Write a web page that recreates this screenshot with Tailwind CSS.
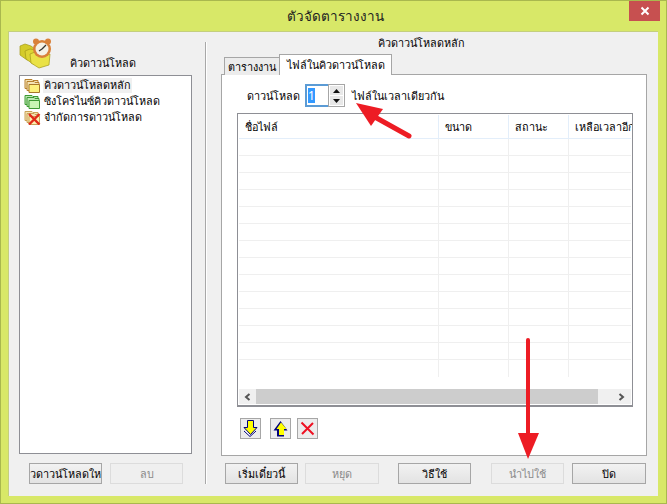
<!DOCTYPE html>
<html lang="th">
  <head>
    <meta charset="UTF-8" />
    <title>ตัวจัดตารางงาน</title>
    <script src="https://cdn.jsdelivr.net/npm/@tailwindcss/browser@4"></script>
  </head>
  <body class="m-0 overflow-hidden">
    <!-- Window -->
    <div class="relative w-[667px] h-[504px] flex flex-col bg-[#d8e868] border border-[#a9b84e] text-black text-[10.8px] leading-[14px] font-['Noto_Sans','DejaVu_Sans',sans-serif]">
      <!-- Title bar -->
      <div class="relative h-[30px] flex items-center justify-center pl-[3px] text-[13.5px] text-[#222]">
        ตัวจัดตารางงาน
        <div class="absolute right-[6px] top-0 w-[31px] h-[20px] bg-[#c75050] flex items-center justify-center">
          <svg width="10" height="10" viewBox="0 0 10 10"><path d="M1.500 1.500 L8.500 8.500 M8.500 1.500 L1.500 8.500" stroke="#fff" stroke-width="2" /></svg>
        </div>
      </div>

      <!-- Dialog body -->
      <div class="ml-[7px] mr-[8px] h-[465px] bg-[#f0f0f0] border-l border-t border-[#c4cf7e] flex">
        <!-- Left column -->
        <div class="w-[196px] shrink-0 flex flex-col pl-[10px]">
          <div class="h-[43px] relative">
            <!-- Clock and folders -->
            <svg class="absolute left-0 top-[6px]" width="34" height="32" viewBox="0 0 34 32">
              <path d="M1 8 L6 6 L12 8 L20 14 L18 22 L8 22 L1 17 Z" fill="#d4cb2a" stroke="#a39a18" stroke-width="0.7" />
              <path d="M6 13 L11 11 L17 12 L24 18 L22 27 L14 26 L7 21 Z" fill="#ddd433" stroke="#a39a18" stroke-width="0.7" />
              <path d="M11 16 L16 14 L24 17 L31 16 L30 27 L20 30 L12 25 Z" fill="#eae246" stroke="#a39a18" stroke-width="0.7" />
              <circle cx="17" cy="3.500" r="3" fill="#d9813a" />
              <circle cx="29" cy="3.500" r="3" fill="#d9813a" />
              <circle cx="23" cy="11" r="9" fill="#d9813a" />
              <circle cx="23" cy="11" r="6.500" fill="#f5f1e6" />
              <path d="M23 11 L27 7 M23 11 L20 13" stroke="#333" stroke-width="1.300" />
            </svg>
            <span class="absolute left-[51px] top-[24px]">คิวดาวน์โหลด</span>
          </div>
          <!-- Tree list -->
          <div class="w-[173px] h-[379px] bg-white border border-[#8e8f95] pt-[1px] pl-[4px] flex flex-col">
            <div class="h-[16px] flex items-center gap-[2px]">
              <svg width="17" height="15" viewBox="0 0 17 15">
                <path d="M1 1.500h7l1 1h5v8H1z" fill="#f4e3b4" stroke="#b8812e" />
                <path d="M3 3.500h7l1 1h4v8H3z" fill="#f4e3b4" stroke="#b8812e" />
                <path d="M5 6.500h10.500v8H5z" fill="#fdf07c" stroke="#a8782a" />
              </svg>
              <span class="bg-[#f0f0f0] px-[1px] h-[15px] flex items-center">คิวดาวน์โหลดหลัก</span>
            </div>
            <div class="h-[16px] flex items-center gap-[2px]">
              <svg width="17" height="15" viewBox="0 0 17 15">
                <path d="M1 1.500h7l1 1h5v8H1z" fill="#bde8b4" stroke="#3e9a34" />
                <path d="M3 3.500h7l1 1h4v8H3z" fill="#bde8b4" stroke="#3e9a34" />
                <path d="M5 6.500h10.500v8H5z" fill="#c9f5b4" stroke="#3e9a34" />
              </svg>
              <span class="px-[1px]">ซิงโครไนซ์คิวดาวน์โหลด</span>
            </div>
            <div class="h-[16px] flex items-center gap-[2px]">
              <svg width="17" height="15" viewBox="0 0 17 15">
                <path d="M1 1.500h7l1 1h5v8H1z" fill="#f4e3b4" stroke="#c9a257" />
                <path d="M3 3.500h7l1 1h4v8H3z" fill="#f4e3b4" stroke="#c9a257" />
                <path d="M5 6.500h10.500v8H5z" fill="#fdf0b0" stroke="#c9a257" />
                <path d="M5 4 L15.500 14.500 M15.500 4 L5 14.500" stroke="#e02a1a" stroke-width="2.400" />
              </svg>
              <span class="px-[1px]">จำกัดการดาวน์โหลด</span>
            </div>
          </div>
          <!-- Left buttons -->
          <div class="mt-[9px] ml-[10px] flex gap-[8px]">
            <div class="w-[73px] h-[21px] border border-[#a6a6a6] bg-gradient-to-b from-[#f2f2f2] to-[#e3e3e3] flex items-center justify-center pr-[18px] overflow-hidden whitespace-nowrap">เพิ่มคิวดาวน์โหลดใหม่</div>
            <div class="w-[73px] h-[21px] border border-[#dcdcdc] bg-[#efefef] text-[#8a8a8a] flex items-center justify-center">ลบ</div>
          </div>
        </div>

        <!-- Divider -->
        <div class="w-[2px] h-[442px] mt-[10px] border-l border-[#a8a8a8] bg-white shrink-0"></div>

        <!-- Right column -->
        <div class="ml-[14px] w-[425px] flex flex-col">
          <div class="h-[22px] pt-[4px] pr-[24px] text-center">คิวดาวน์โหลดหลัก</div>
          <!-- Tabs -->
          <div class="h-[21px] flex items-end pl-[3px] relative z-10">
            <div class="w-[56px] h-[18px] border border-b-0 border-[#a6a6a6] bg-[#ececec] flex items-center justify-center">ตารางงาน</div>
            <div class="w-[113px] h-[21px] -ml-[1px] border border-b-0 border-[#a6a6a6] bg-white flex items-center justify-center">ไฟล์ในคิวดาวน์โหลด</div>
          </div>
          <!-- Tab panel -->
          <div class="w-[426px] h-[382px] -mt-[1px] bg-white border border-[#a6a6a6] flex flex-col pl-[15px]">
            <!-- Spinner row -->
            <div class="h-[38px] pt-[9px] flex items-start">
              <span class="ml-[10px] w-[58px] h-[23px] flex items-center">ดาวน์โหลด</span>
              <div class="w-[23px] h-[23px] border-2 border-r-0 border-[#5b9bd5] flex items-center pl-[1px]">
                <span class="bg-[#3399ff] text-white h-[15px] w-[7px] flex items-center justify-center text-[12px]">1</span>
              </div>
              <div class="w-[17px] h-[23px] border border-[#a6a6a6] flex flex-col gap-[1px] p-[1px] bg-white">
                <div class="h-[9px] bg-[#e8e8e8] flex items-center justify-center"><svg width="7" height="4" viewBox="0 0 7 4"><path d="M3.500 0 L7 4 H0 Z" fill="#111" /></svg></div>
                <div class="h-[9px] bg-[#e8e8e8] flex items-center justify-center"><svg width="7" height="4" viewBox="0 0 7 4"><path d="M0 0 H7 L3.500 4 Z" fill="#111" /></svg></div>
              </div>
              <span class="ml-[7px] h-[23px] flex items-center">ไฟล์ในเวลาเดียวกัน</span>
            </div>

            <!-- Table -->
            <div class="w-[396px] h-[294px] border border-[#8e8f95] border-b-2 p-[1px] flex flex-col overflow-hidden">
              <div class="h-[24px] shrink-0 flex border-b border-[#e3eefa] bg-white">
                <div class="w-[200px] shrink-0 pl-[6px] flex items-center border-r border-[#e3eefa]">ชื่อไฟล์</div>
                <div class="w-[70px] shrink-0 pl-[6px] flex items-center border-r border-[#e3eefa]">ขนาด</div>
                <div class="w-[60px] shrink-0 pl-[6px] flex items-center border-r border-[#e3eefa]">สถานะ</div>
                <div class="flex-1 pl-[6px] flex items-center whitespace-nowrap">เหลือเวลาอีก</div>
              </div>
              <!-- Empty rows -->
              <div class="flex-1 grid grid-cols-[200px_70px_60px_1fr] auto-rows-[17px] overflow-hidden">
                <div class="border-r border-b border-[#efefef]"></div><div class="border-r border-b border-[#efefef]"></div><div class="border-r border-b border-[#efefef]"></div><div class="border-b border-[#efefef]"></div>
                <div class="border-r border-b border-[#efefef]"></div><div class="border-r border-b border-[#efefef]"></div><div class="border-r border-b border-[#efefef]"></div><div class="border-b border-[#efefef]"></div>
                <div class="border-r border-b border-[#efefef]"></div><div class="border-r border-b border-[#efefef]"></div><div class="border-r border-b border-[#efefef]"></div><div class="border-b border-[#efefef]"></div>
                <div class="border-r border-b border-[#efefef]"></div><div class="border-r border-b border-[#efefef]"></div><div class="border-r border-b border-[#efefef]"></div><div class="border-b border-[#efefef]"></div>
                <div class="border-r border-b border-[#efefef]"></div><div class="border-r border-b border-[#efefef]"></div><div class="border-r border-b border-[#efefef]"></div><div class="border-b border-[#efefef]"></div>
                <div class="border-r border-b border-[#efefef]"></div><div class="border-r border-b border-[#efefef]"></div><div class="border-r border-b border-[#efefef]"></div><div class="border-b border-[#efefef]"></div>
                <div class="border-r border-b border-[#efefef]"></div><div class="border-r border-b border-[#efefef]"></div><div class="border-r border-b border-[#efefef]"></div><div class="border-b border-[#efefef]"></div>
                <div class="border-r border-b border-[#efefef]"></div><div class="border-r border-b border-[#efefef]"></div><div class="border-r border-b border-[#efefef]"></div><div class="border-b border-[#efefef]"></div>
                <div class="border-r border-b border-[#efefef]"></div><div class="border-r border-b border-[#efefef]"></div><div class="border-r border-b border-[#efefef]"></div><div class="border-b border-[#efefef]"></div>
                <div class="border-r border-b border-[#efefef]"></div><div class="border-r border-b border-[#efefef]"></div><div class="border-r border-b border-[#efefef]"></div><div class="border-b border-[#efefef]"></div>
                <div class="border-r border-b border-[#efefef]"></div><div class="border-r border-b border-[#efefef]"></div><div class="border-r border-b border-[#efefef]"></div><div class="border-b border-[#efefef]"></div>
                <div class="border-r border-b border-[#efefef]"></div><div class="border-r border-b border-[#efefef]"></div><div class="border-r border-b border-[#efefef]"></div><div class="border-b border-[#efefef]"></div>
                <div class="border-r border-b border-[#efefef]"></div><div class="border-r border-b border-[#efefef]"></div><div class="border-r border-b border-[#efefef]"></div><div class="border-b border-[#efefef]"></div>
                <div class="border-r border-[#efefef]"></div><div class="border-r border-[#efefef]"></div><div class="border-r border-[#efefef]"></div><div></div>
              </div>
              <!-- Horizontal scrollbar -->
              <div class="h-[15px] shrink-0 flex items-center bg-[#f0f0f0]">
                <div class="w-[17px] h-full flex items-center justify-center"><svg width="7" height="8" viewBox="0 0 7 8"><path d="M5.500 1 L2 4 L5.500 7" fill="none" stroke="#555" stroke-width="2" /></svg></div>
                <div class="w-[342px] h-full bg-[#cdcdcd]"></div>
                <div class="flex-1 h-full flex items-center justify-end pr-[6px]"><svg width="7" height="8" viewBox="0 0 7 8"><path d="M1.500 1 L5 4 L1.500 7" fill="none" stroke="#555" stroke-width="2" /></svg></div>
              </div>
            </div>

            <!-- Queue buttons -->
            <div class="mt-[11px] ml-[3px] flex">
              <div class="w-[21px] h-[21px] border border-[#a6a6a6] bg-[#ececec] flex items-center justify-center">
                <svg width="15" height="17" viewBox="0 0 15 17"><path d="M1 11 L7 16.500 L13 11" fill="#fff" stroke="#00007a" /><path d="M4.500 0.500h6v7h3.500L7.500 14.500 1 7.500h3.500z" fill="#ffff00" stroke="#00007a" /></svg>
              </div>
              <div class="ml-[9px] w-[21px] h-[21px] border border-[#a6a6a6] bg-[#ececec] flex items-center justify-center">
                <svg width="15" height="17" viewBox="0 0 15 17"><path d="M4 16.500h7v-6h3.500L7.500 1 0.500 10.500H4z" fill="#00007a" /><path d="M6 15h5V9h2.500L8 2.500 3.500 9H6z" fill="#ffff00" /></svg>
              </div>
              <div class="ml-[6px] w-[21px] h-[21px] border border-[#a6a6a6] bg-[#ececec] flex items-center justify-center">
                <svg width="15" height="15" viewBox="0 0 15 15"><path d="M1.500 1.500 L13.500 13.500 M13 2 L2 13" stroke="#ee1122" stroke-width="2" /></svg>
              </div>
            </div>
          </div>

          <!-- Bottom buttons -->
          <div class="mt-[7px] ml-[4px] flex">
            <div class="w-[73px] h-[21px] border border-[#a6a6a6] bg-gradient-to-b from-[#f2f2f2] to-[#e3e3e3] flex items-center justify-center">เริ่มเดี๋ยวนี้</div>
            <div class="ml-[7px] w-[74px] h-[21px] border border-[#dcdcdc] bg-[#efefef] text-[#8a8a8a] flex items-center justify-center">หยุด</div>
            <div class="ml-[19px] w-[74px] h-[21px] border border-[#a6a6a6] bg-gradient-to-b from-[#f2f2f2] to-[#e3e3e3] flex items-center justify-center">วิธีใช้</div>
            <div class="ml-[20px] w-[73px] h-[21px] border border-[#dcdcdc] bg-[#efefef] text-[#8a8a8a] flex items-center justify-center">นำไปใช้</div>
            <div class="ml-[8px] w-[74px] h-[21px] border border-[#a6a6a6] bg-gradient-to-b from-[#f2f2f2] to-[#e3e3e3] flex items-center justify-center">ปิด</div>
          </div>
        </div>
      </div>

      <!-- Annotation arrows -->
      <svg class="absolute left-[-1px] top-[-1px] pointer-events-none" width="667" height="504" viewBox="0 0 667 504">
        <path d="M409 136 L373 116" stroke="#ed1c24" stroke-width="5" stroke-linecap="round" />
        <path d="M356 103 L383 109 L371 126 Z" fill="#ed1c24" />
        <path d="M528 340 L528 440" stroke="#ed1c24" stroke-width="4" stroke-linecap="round" />
        <path d="M518 433 H539 L528 459 Z" fill="#ed1c24" />
      </svg>
    </div>
  </body>
</html>
